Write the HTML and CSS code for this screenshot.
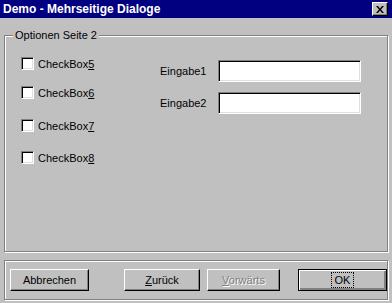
FILE: index.html
```html
<!DOCTYPE html>
<html lang="de">
<head>
<meta charset="UTF-8">
<title>Demo - Mehrseitige Dialoge</title>
<link rel="stylesheet" href="styles.css">
</head>
<body>

<div class="window">
    <div class="titlebar">
        <span class="title">Demo - Mehrseitige Dialoge</span>
        <span class="close-btn">
            <svg width="8" height="7" viewBox="0 0 8 7">
                <path d="M0 0h2l2 2.5 2-2.5h2l-3 3.5 3 3.5h-2l-2-2.5-2 2.5h-2l3-3.5z" fill="#000"/>
            </svg>
        </span>
    </div>

    <div class="content">
        <fieldset class="group">
            <legend>Optionen Seite 2</legend>
            <div class="group-body">
                <div class="checks">
                    <label class="check"><span class="box"></span>CheckBox<u>5</u></label>
                    <label class="check row-2"><span class="box"></span>CheckBox<u>6</u></label>
                    <label class="check row-3"><span class="box"></span>CheckBox<u>7</u></label>
                    <label class="check row-4"><span class="box"></span>CheckBox<u>8</u></label>
                </div>
                <div class="fields">
                    <div class="field">
                        <span class="field-label">Eingabe1</span>
                        <span class="edit"></span>
                    </div>
                    <div class="field">
                        <span class="field-label">Eingabe2</span>
                        <span class="edit"></span>
                    </div>
                </div>
            </div>
        </fieldset>

        <div class="buttons">
            <button class="btn btn-cancel">Abbrechen</button>
            <button class="btn btn-back"><u>Z</u>urück</button>
            <button class="btn btn-next" disabled><u>V</u>orwärts</button>
            <button class="btn btn-ok"><span class="focus">OK</span></button>
        </div>
    </div>
</div>

</body>
</html>
```

FILE: styles.css
```css
* {
    box-sizing: border-box;
}
body {
    margin: 0;
    padding: 0;
    background-color: #c0c0c0;
    font-family: "Liberation Sans", Arial, sans-serif;
    font-size: 11px;
    color: #000;
}
.window {
    width: 392px;
    height: 303px;
    background-color: #c0c0c0;
    overflow: hidden;
}
.titlebar {
    height: 18px;
    background-color: #000080;
    color: #fff;
    display: flex;
    align-items: center;
    justify-content: space-between;
    padding: 0 4px 0 3px;
}
.title {
    font-weight: bold;
    font-size: 12px;
}
.close-btn {
    width: 16px;
    height: 14px;
    background-color: #c0c0c0;
    border-top: 1px solid #fff;
    border-left: 1px solid #fff;
    border-right: 1px solid #000;
    border-bottom: 1px solid #000;
    box-shadow: inset -1px -1px 0 #808080;
    display: flex;
    align-items: center;
    justify-content: center;
}
.content {
    padding: 11px 4px 0 4px;
}

/* group box */
.group {
    margin: 0;
    padding: 0;
    height: 223px;
    border: 1px solid #808080;
    box-shadow: 1px 1px 0 #fff, inset 1px 1px 0 #fff;
}
.group legend {
    margin-left: 8px;
    padding: 0 2px;
    background-color: #c0c0c0;
    line-height: 13px;
}
.group-body {
    display: flex;
    padding: 15px 0 0 16px;
}
.checks {
    display: flex;
    flex-direction: column;
    width: 139px;
}
.check {
    display: flex;
    align-items: center;
    height: 13px;
}
.row-2 {
    margin-top: 16px;
}
.row-3 {
    margin-top: 20px;
}
.row-4 {
    margin-top: 19px;
}
.box {
    width: 13px;
    height: 13px;
    margin-right: 4px;
    background-color: #fff;
    border-top: 1px solid #808080;
    border-left: 1px solid #808080;
    border-right: 1px solid #fff;
    border-bottom: 1px solid #fff;
    box-shadow: inset 1px 1px 0 #000, inset -1px -1px 0 #dfdfdf;
}
u {
    text-decoration: underline;
    text-underline-offset: 1px;
}
.fields {
    display: flex;
    flex-direction: column;
    gap: 10px;
    padding-top: 3px;
}
.field {
    display: flex;
    align-items: center;
}
.field-label {
    width: 58px;
}
.edit {
    width: 143px;
    height: 22px;
    background-color: #fff;
    border-top: 1px solid #808080;
    border-left: 1px solid #808080;
    border-right: 1px solid #fff;
    border-bottom: 1px solid #fff;
    box-shadow: inset 1px 1px 0 #000, inset -1px -1px 0 #dfdfdf;
}

/* button panel */
.buttons {
    margin-top: 8px;
    height: 40px;
    display: flex;
    align-items: center;
    padding-left: 5px;
    border: 1px solid #808080;
    box-shadow: 1px 1px 0 #fff, inset 1px 1px 0 #fff;
}
.btn {
    height: 22px;
    padding: 0;
    font-family: inherit;
    font-size: 11px;
    color: #000;
    background-color: #c0c0c0;
    border-top: 1px solid #fff;
    border-left: 1px solid #fff;
    border-right: 1px solid #000;
    border-bottom: 1px solid #000;
    box-shadow: inset -1px -1px 0 #808080;
    border-radius: 0;
}
.btn-cancel {
    width: 79px;
}
.btn-back {
    width: 76px;
    margin-left: 35px;
}
.btn-next {
    width: 73px;
    margin-left: 7px;
    color: #808080;
    text-shadow: 1px 1px 0 #fff;
}
.btn-ok {
    width: 89px;
    margin-left: 18px;
    border: 1px solid #000;
    box-shadow: inset 1px 1px 0 #fff, inset -2px -2px 0 #808080;
    display: flex;
    align-items: center;
    justify-content: center;
}
.focus {
    padding: 1px 3px;
    border: 1px dotted #000;
}
```
